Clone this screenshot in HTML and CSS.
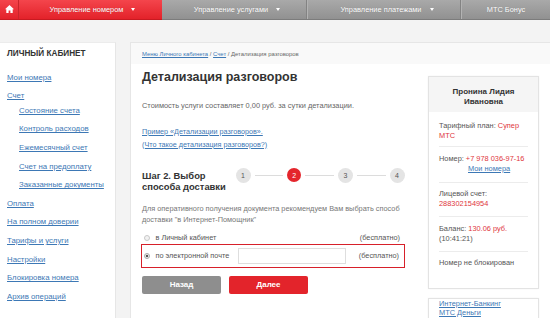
FILE: index.html
```html
<!DOCTYPE html>
<html lang="ru">
<head>
<meta charset="utf-8">
<title>Детализация разговоров</title>
<link rel="stylesheet" href="styles.css">
</head>
<body>
<nav class="nav">
  <div class="nav-red">
    <a class="nav-home" href="#"><svg width="9" height="8" viewBox="0 0 9 8"><path d="M4.5 0 L9 4.2 L7.7 4.2 L7.7 8 L5.4 8 L5.4 5.4 L3.6 5.4 L3.6 8 L1.3 8 L1.3 4.2 L0 4.2 Z" fill="#fff"/></svg></a>
    <a class="nav-item nav-item-red" href="#">Управление номером <span class="tri"></span></a>
  </div>
  <div class="nav-gray">
    <a class="nav-item nav-g1" href="#">Управление услугами <span class="tri"></span></a>
    <a class="nav-item nav-g2" href="#">Управление платежами <span class="tri"></span></a>
    <a class="nav-item nav-g3" href="#">МТС Бонус</a>
  </div>
</nav>
<div class="page">
  <aside class="sidebar">
    <div class="side-head">ЛИЧНЫЙ КАБИНЕТ</div>
    <ul class="side-list">
      <li><a href="#">Мои номера</a></li>
      <li><a href="#">Счет</a>
        <ul class="side-sub">
          <li><a href="#">Состояние счета</a></li>
          <li><a href="#">Контроль расходов</a></li>
          <li><a href="#">Ежемесячный счет</a></li>
          <li><a href="#">Счет на предоплату</a></li>
          <li><a href="#">Заказанные документы</a></li>
        </ul>
      </li>
      <li><a href="#">Оплата</a></li>
      <li><a href="#">На полном доверии</a></li>
      <li><a href="#">Тарифы и услуги</a></li>
      <li><a href="#">Настройки</a></li>
      <li><a href="#">Блокировка номера</a></li>
      <li><a href="#">Архив операций</a></li>
    </ul>
  </aside>
  <main class="main">
    <div class="crumbs"><a href="#">Меню Личного кабинета</a> / <a href="#">Счет</a> / Детализация разговоров</div>
    <div class="cols">
      <section class="content">
        <h1 class="title">Детализация разговоров</h1>
        <p class="cost">Стоимость услуги составляет 0,00 руб. за сутки детализации.</p>
        <div class="links">
          <a href="#">Пример «Детализации разговоров».</a><br>
          <a href="#">(Что такое детализация разговоров?)</a>
        </div>
        <div class="step-row">
          <div class="step-title">Шаг 2. Выбор<br>способа доставки</div>
          <div class="steps">
            <span class="step">1</span><span class="step-line"></span>
            <span class="step step-active">2</span><span class="step-line"></span>
            <span class="step">3</span><span class="step-line"></span>
            <span class="step">4</span>
          </div>
        </div>
        <p class="desc">Для оперативного получения документа рекомендуем Вам выбрать способ доставки "в Интернет-Помощник"</p>
        <div class="opt opt-first">
          <span class="radio"></span>
          <span class="opt-label">в Личный кабинет</span>
          <span class="opt-price">(бесплатно)</span>
        </div>
        <div class="opt opt-box">
          <span class="radio radio-on"></span>
          <span class="opt-label opt-label-fixed">по электронной почте</span>
          <span class="email"></span>
          <span class="opt-price">(бесплатно)</span>
        </div>
        <div class="buttons">
          <a class="btn btn-gray" href="#">Назад</a>
          <a class="btn btn-red" href="#">Далее</a>
        </div>
      </section>
      <aside class="info">
        <div class="card">
          <div class="card-head">Пронина Лидия<br>Ивановна</div>
          <div class="card-item card-item-first">Тарифный план: <span class="red">Супер</span><br><span class="red">МТС</span></div>
          <div class="card-item card-item-num">Номер: <span class="red">+7 978 036-97-16</span><br><a class="indent" href="#">Мои номера</a></div>
          <div class="card-item">Лицевой счет:<br><span class="red">288302154954</span></div>
          <div class="card-item">Баланс: <span class="red">130.06 руб.</span><br>(10:41:21)</div>
          <div class="card-item card-item-last">Номер не блокирован</div>
        </div>
        <div class="card card-bank">
          <a href="#">Интернет-Банкинг</a><br>
          <a href="#">МТС Деньги</a>
        </div>
      </aside>
    </div>
  </main>
</div>
</body>
</html>
```
FILE: styles.css
```css
* { box-sizing: border-box; }
html, body { margin: 0; padding: 0; }
body {
  font-family: "Liberation Sans", Arial, sans-serif;
  background: #f3f3f3;
  color: #555;
  width: 550px;
  height: 318px;
  overflow: hidden;
}
a { color: #3d78b5; }

.nav { display: flex; height: 20px; }
.nav-red {
  display: flex;
  width: 162px;
  background: linear-gradient(#f4454c, #e3222a);
  border-bottom: 1px solid #c81a21;
}
.nav-home {
  width: 19px;
  display: flex;
  align-items: center;
  justify-content: center;
  border-right: 1px solid #c9252b;
  padding-bottom: 1px;
}
.nav-home svg { display: block; }
.nav-gray {
  display: flex;
  flex: 1;
  background: linear-gradient(#a9a9a9, #919191);
  border-bottom: 1px solid #7c7c7c;
}
.nav-item {
  display: flex;
  align-items: center;
  justify-content: center;
  color: #fff;
  text-decoration: none;
  font-size: 7.4px;
  text-shadow: 0 0 1px rgba(0,0,0,0.2);
  padding-bottom: 1px;
}
.nav-item-red { flex: 1; padding-left: 4px; }
.nav-g1 { width: 145px; border-right: 1px solid #838383; padding-left: 6px; }
.nav-g2 { width: 154px; border-right: 1px solid #838383; border-left: 1px solid #b3b3b3; padding-left: 6px; }
.nav-g3 { flex: 1; border-left: 1px solid #b3b3b3; }
.tri {
  display: inline-block;
  width: 0; height: 0;
  border-left: 2.5px solid transparent;
  border-right: 2.5px solid transparent;
  border-top: 3px solid #fff;
  margin-left: 8px;
}

.page { display: flex; padding-top: 22px; height: 298px; overflow: hidden; }
.sidebar {
  width: 116px;
  background: #fff;
  border-right: 1px solid #e6e6e6;
  border-top: 1px solid #ececec;
  flex: none;
}
.side-head {
  font-size: 8.2px;
  font-weight: bold;
  color: #333;
  line-height: 10px;
  padding: 6px 7px 0;
  height: 16px;
}
.side-list { list-style: none; margin: 9.7px 0 0; padding: 0 0 0 7px; }
.side-list li { line-height: 18.6px; font-size: 7.8px; }
.side-sub { list-style: none; margin: -4px 0 0; padding: 0 0 0 12px; }

.main {
  margin-left: 14px;
  flex: 1;
  background: #fff;
  border-left: 1px solid #e6e6e6;
  border-top: 1px solid #e6e6e6;
}
.crumbs {
  height: 21px;
  background: #f9f9f9;
  font-size: 5.9px;
  line-height: 22px;
  padding-left: 11px;
  color: #666;
}
.cols { display: flex; gap: 23px; padding-left: 11px; }
.content { width: 263px; flex: none; }
.title {
  margin: 4px 0 0;
  font-size: 12.5px;
  line-height: 18px;
  font-weight: bold;
  color: #333;
}
.cost { margin: 15px 0 0; font-size: 7.4px; line-height: 10px; color: #666; }
.links { margin-top: 13.5px; font-size: 7.2px; line-height: 13px; }
.step-row { display: flex; margin-top: 19px; }
.step-title {
  width: 93.5px;
  font-size: 9.4px;
  font-weight: bold;
  line-height: 11px;
  color: #333;
}
.steps { display: flex; align-items: center; width: 169px; height: 15px; margin-top: -2px; }
.step {
  width: 15px; height: 15px;
  border-radius: 50%;
  background: #e4e4e4;
  color: #555;
  font-size: 7px;
  display: flex;
  align-items: center;
  justify-content: center;
  flex: none;
}
.step-active { background: #e4252c; color: #fff; width: 14px; height: 14px; }
.step-line { flex: 1; height: 1px; background: #dcdcdc; margin: 0 4px; }
.desc { margin: 11px 0 0; font-size: 7.35px; line-height: 11px; color: #777; }

.opt {
  display: flex;
  align-items: center;
  font-size: 7.3px;
  color: #555;
  padding: 0 5px 0 1.5px;
}
.opt-first { margin-top: 7px; height: 12px; }
.radio {
  width: 6px; height: 6px;
  border-radius: 50%;
  border: 1px solid #c8c8c8;
  background: #f2f2f2;
  flex: none;
  margin-right: 6px;
}
.radio-on { background: radial-gradient(circle, #555 0 1.3px, #eee 1.6px); border-color: #aaa; }
.opt-label { flex: 1; }
.opt-label-fixed { flex: none; width: 82.5px; }
.opt-price { flex: none; }
.opt-box {
  height: 24px;
  border: 1.5px solid #d7202a;
  margin-left: -1px;
  padding-left: 1.5px;
}
.email {
  width: 108px; height: 16px;
  border: 1px solid #dedede;
  background: #fff;
  flex: none;
  margin-right: auto;
}
.buttons { display: flex; gap: 8px; margin-top: 8px; }
.btn {
  width: 79px; height: 18px;
  border-radius: 2px;
  color: #fff;
  font-weight: bold;
  font-size: 8px;
  text-decoration: none;
  display: flex;
  align-items: center;
  justify-content: center;
}
.btn-gray { background: #8e8e8e; }
.btn-red { background: #e3242b; }

.info { width: 111px; flex: none; padding-top: 12px; }
.card {
  border: 1px solid #e3e3e3;
  background: #fff;
  box-shadow: 0 0 2px rgba(0,0,0,0.05);
  font-size: 7.4px;
  line-height: 10px;
  color: #555;
}
.card-head {
  background: #f5f5f5;
  height: 35px;
  padding-top: 10px;
  text-align: center;
  font-weight: bold;
  color: #333;
  font-size: 8px;
}
.card-item { margin: 0 10px; padding: 6.5px 0 7px; border-bottom: 1px solid #ececec; }
.card-item-first { padding-top: 9px; padding-bottom: 5px; }
.card-item-num { padding-bottom: 8px; }
.card-item-last { border-bottom: none; padding-bottom: 19.5px; }
.red { color: #e0353b; }
.indent { margin-left: 29px; }
.card-bank { margin-top: 9px; padding: 0 10px 10px; line-height: 9px; }
```
